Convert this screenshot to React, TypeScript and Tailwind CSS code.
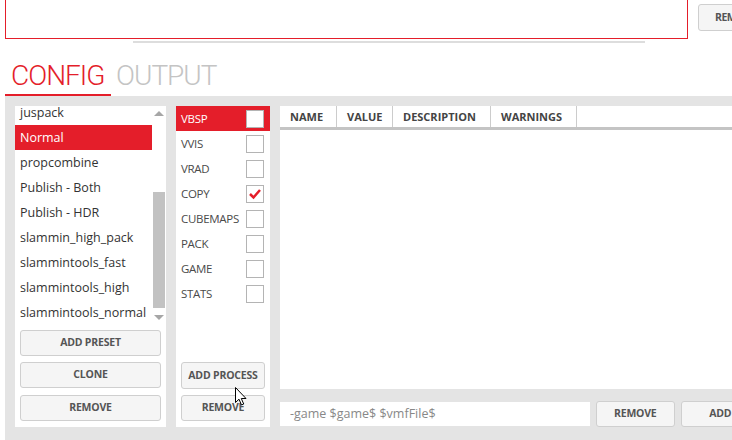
import React from 'react'

const presets = [
  'juspack',
  'Normal',
  'propcombine',
  'Publish - Both',
  'Publish - HDR',
  'slammin_high_pack',
  'slammintools_fast',
  'slammintools_high',
  'slammintools_normal',
]

const processes = [
  { name: 'VBSP', checked: false },
  { name: 'VVIS', checked: false },
  { name: 'VRAD', checked: false },
  { name: 'COPY', checked: true },
  { name: 'CUBEMAPS', checked: false },
  { name: 'PACK', checked: false },
  { name: 'GAME', checked: false },
  { name: 'STATS', checked: false },
]

const columns = [
  { label: 'NAME', w: 'w-[57px]' },
  { label: 'VALUE', w: 'w-[56px]' },
  { label: 'DESCRIPTION', w: 'w-[98px]' },
  { label: 'WARNINGS', w: 'w-[86px]' },
]

const btn =
  'flex items-center justify-center rounded-[3px] border border-[#cfcfcf] bg-[#f5f5f5] text-[10.5px] font-bold tracking-[-0.2px] text-[#555]'

export default function App() {
  return (
    <div
      className="relative flex h-[440px] w-[732px] flex-col overflow-hidden bg-white"
      style={{ fontFamily: "'Open Sans', 'Noto Sans', sans-serif" }}
    >
      {/* Top text area */}
      <div className="flex items-start pl-[5px]">
        <div className="h-[39px] w-[683px] shrink-0 border border-t-0 border-[#e41e2a] bg-white" />
        <button className="ml-[10px] mt-[4px] flex h-[27px] w-[80px] shrink-0 items-center rounded-[3px] border border-[#cfcfcf] bg-[#f5f5f5] pl-[16px] text-[10.5px] font-bold tracking-[-0.5px] text-[#555]">
          REMOVE
        </button>
      </div>
      <div className="ml-[133px] mt-[2px] h-[2px] w-[512px] bg-[#dddddd]" />

      {/* Tabs */}
      <div className="ml-[5px] mt-[16px] flex" style={{ fontFamily: 'Roboto, sans-serif' }}>
        <div className="w-[106px] border-b-2 border-[#e41e2a] pb-[2px] pl-[6px] text-[28px] font-light leading-[33px] tracking-[-1px] text-[#e41e2a]">
          CONFIG
        </div>
        <div className="ml-[5px] pb-[4px] text-[28px] font-light leading-[33px] tracking-[-1px] text-[#c4c4c4]">
          OUTPUT
        </div>
      </div>

      {/* Config panel */}
      <div className="ml-[5px] flex h-[344px] items-start gap-[10px] bg-[#e4e4e4] pl-[10px] pt-[10px]">
        {/* Presets */}
        <div className="flex h-[321px] w-[151px] shrink-0 flex-col bg-white">
          <div className="flex h-[218px]">
            <div className="w-[137px] overflow-hidden">
              <div className="mt-[-6px]">
                {presets.map((p) => (
                  <div
                    key={p}
                    className={`h-[25px] pl-[5px] pt-[1px] text-[12.5px] leading-[24px] ${
                      p === 'Normal' ? 'bg-[#e41e2a] text-white' : 'text-[#333]'
                    }`}
                  >
                    {p}
                  </div>
                ))}
              </div>
            </div>
            <div className="flex w-[14px] flex-col">
              <div className="flex h-[14px] items-center justify-center">
                <svg width="10" height="5" viewBox="0 0 10 5">
                  <polygon points="0,5 10,5 5,0" fill="#a6a6a6" />
                </svg>
              </div>
              <div className="h-[72px]" />
              <div className="mx-auto h-[116px] w-[12px] bg-[#c2c2c2]" />
              <div className="h-[4px]" />
              <div className="flex h-[10px] items-center justify-center">
                <svg width="10" height="5" viewBox="0 0 10 5">
                  <polygon points="0,0 10,0 5,5" fill="#a6a6a6" />
                </svg>
              </div>
            </div>
          </div>
          <div className="flex flex-col px-[5px] pt-[6px]">
            <button className={`${btn} h-[26px]`}>ADD PRESET</button>
            <button className={`${btn} mt-[6px] h-[26px]`}>CLONE</button>
            <button className={`${btn} mt-[7px] h-[26px]`}>REMOVE</button>
          </div>
        </div>

        {/* Processes */}
        <div className="flex h-[321px] w-[94px] shrink-0 flex-col bg-white">
          {processes.map((p) => (
            <div
              key={p.name}
              className={`flex h-[25px] items-center justify-between pl-[5px] pr-[6px] text-[11.5px] tracking-[-0.3px] ${
                p.name === 'VBSP' ? 'bg-[#e41e2a] text-white' : 'text-[#4a4a4a]'
              }`}
            >
              <span className="pt-[1px]">{p.name}</span>
              <div className="flex h-[18px] w-[18px] shrink-0 items-center justify-center border border-[#b4b4b4] bg-white">
                {p.checked && (
                  <svg width="16" height="16" viewBox="0 0 16 16">
                    <path d="M3 8 L6.5 11.5 L13 4" fill="none" stroke="#e41e2a" strokeWidth="2.5" />
                  </svg>
                )}
              </div>
            </div>
          ))}
          <div className="flex-1" />
          <div className="flex flex-col px-[5px] pb-[6px]">
            <button className={`${btn} h-[27px] border-[#c8c8c8] bg-[#e2e2e2]`}>ADD PROCESS</button>
            <button className={`${btn} mt-[6px] h-[26px]`}>REMOVE</button>
          </div>
        </div>

        {/* Parameters table */}
        <div className="flex w-[480px] shrink-0 flex-col">
          <div className="h-[283px] bg-white">
            <div className="flex h-[24px] border-b-[3px] border-[#c4c4c4]">
              {columns.map((c) => (
                <div
                  key={c.label}
                  className={`${c.w} border-r border-[#cccccc] px-[10px] pt-[1px] text-[11px] font-bold leading-[20px] text-[#444]`}
                >
                  {c.label}
                </div>
              ))}
            </div>
          </div>
          <div className="mt-[12px] flex items-center">
            <div className="h-[24px] w-[312px] bg-white pl-[10px] text-[12.5px] leading-[24px] text-[#888]">
              -game $game$ $vmfFile$
            </div>
            <button className={`${btn} ml-[6px] h-[26px] w-[79px]`}>REMOVE</button>
            <button className={`${btn} ml-[6px] h-[26px] w-[80px]`}>ADD</button>
          </div>
        </div>
      </div>

      {/* Mouse cursor */}
      <svg className="absolute left-[235px] top-[387px]" width="13" height="20" viewBox="0 0 13 20">
        <path
          d="M0.5 0.5 L0.5 15.5 L4 12.2 L6.5 18 L8.7 17 L6.3 11.5 L11 11.5 Z"
          fill="white"
          stroke="black"
          strokeWidth="1"
          strokeLinejoin="round"
        />
      </svg>
    </div>
  )
}
